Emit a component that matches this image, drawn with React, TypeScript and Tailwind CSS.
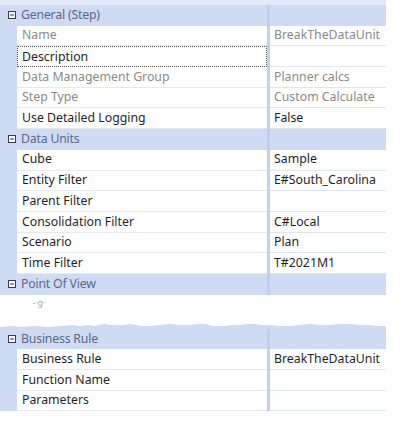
import React from 'react';

type Prop = { name: string; value?: string; muted?: boolean; focused?: boolean };

const SECTIONS: { title: string; rows: Prop[] }[] = [
  {
    title: 'General (Step)',
    rows: [
      { name: 'Name', value: 'BreakTheDataUnit', muted: true },
      { name: 'Description', focused: true },
      { name: 'Data Management Group', value: 'Planner calcs', muted: true },
      { name: 'Step Type', value: 'Custom Calculate', muted: true },
      { name: 'Use Detailed Logging', value: 'False' },
    ],
  },
  {
    title: 'Data Units',
    rows: [
      { name: 'Cube', value: 'Sample' },
      { name: 'Entity Filter', value: 'E#South_Carolina' },
      { name: 'Parent Filter' },
      { name: 'Consolidation Filter', value: 'C#Local' },
      { name: 'Scenario', value: 'Plan' },
      { name: 'Time Filter', value: 'T#2021M1' },
    ],
  },
];

const BUSINESS_RULE: Prop[] = [
  { name: 'Business Rule', value: 'BreakTheDataUnit' },
  { name: 'Function Name' },
  { name: 'Parameters' },
];

function CollapseIcon() {
  return (
    <svg width="8" height="8" viewBox="0 0 8 8" className="shrink-0">
      <rect x="0.5" y="0.5" width="7" height="7" fill="#f4f6fb" stroke="#3a3f4a" strokeWidth="1" />
      <line x1="2" y1="4" x2="6" y2="4" stroke="#3a3f4a" strokeWidth="1" />
    </svg>
  );
}

function CategoryRow({ title }: { title: string }) {
  return (
    <div className="flex h-[20.7px] bg-[#cfdbf2]">
      <div className="w-[267px] flex items-center pl-[8px] gap-[5px] text-[#5a6988]">
        <CollapseIcon />
        <span className="leading-none tracking-[-0.2px]">{title}</span>
      </div>
      <div className="w-[3px] bg-[#c0cfeb]" />
      <div className="flex-1" />
    </div>
  );
}

function PropRow({ row }: { row: Prop }) {
  const tone = row.muted ? 'text-[#8a8a8a]' : 'text-[#1f1f1f]';
  return (
    <div className="flex h-[20.7px]">
      <div className="w-[17px] bg-[#cfdbf2]" />
      <div
        className={
          row.focused
            ? 'w-[250px] flex items-center pl-[4px] bg-white border border-dotted border-[#555]'
            : 'w-[250px] flex items-center pl-[5px] bg-white border-b border-[#e6e9f0]'
        }
      >
        <span className={tone}>{row.name}</span>
      </div>
      <div className="w-[3px] bg-[#c3d1ec]" />
      <div className="flex-1 flex items-center pl-[4px] bg-white border-b border-[#e1e5ee] whitespace-nowrap overflow-hidden">
        <span className={tone}>{row.value ?? ''}</span>
      </div>
    </div>
  );
}

export default function App() {
  return (
    <div
      className="w-[413px] h-[422px] bg-white overflow-hidden text-[12.3px]"
      style={{ fontFamily: '"Noto Sans", "Open Sans", sans-serif' }}
    >
      <div className="w-[386px]">
        <div className="h-[5px] bg-[#e4eaf7]" />
        {SECTIONS.map((s) => (
          <div key={s.title}>
            <CategoryRow title={s.title} />
            {s.rows.map((r) => (
              <PropRow key={r.name} row={r} />
            ))}
          </div>
        ))}
        <CategoryRow title="Point Of View" />

        {/* torn gap */}
        <div className="h-[28px] bg-white pl-[33px] pt-[4px] text-[8px] leading-none text-[#9aa0aa]">
          -·g·
        </div>
        <svg width="386" height="6" viewBox="0 0 386 6" className="block" preserveAspectRatio="none">
          <polygon
            fill="#cfdbf2"
            points="0,6 0,4 12,3 20,4 34,3 48,4 60,3 72,2 80,3 88,2 95,3 104,1 110,2 122,2 130,1 142,3 150,3 160,2 170,1 180,2 190,2 198,1 205,1 214,3 225,3 232,2 240,2 248,1 255,1 262,2 270,2 280,3 290,3 300,2 310,1 320,2 330,2 340,1 350,1 360,2 370,2 378,3 386,3 386,6"
          />
        </svg>
        <CategoryRow title="Business Rule" />
        {BUSINESS_RULE.map((r) => (
          <PropRow key={r.name} row={r} />
        ))}
      </div>
    </div>
  );
}
